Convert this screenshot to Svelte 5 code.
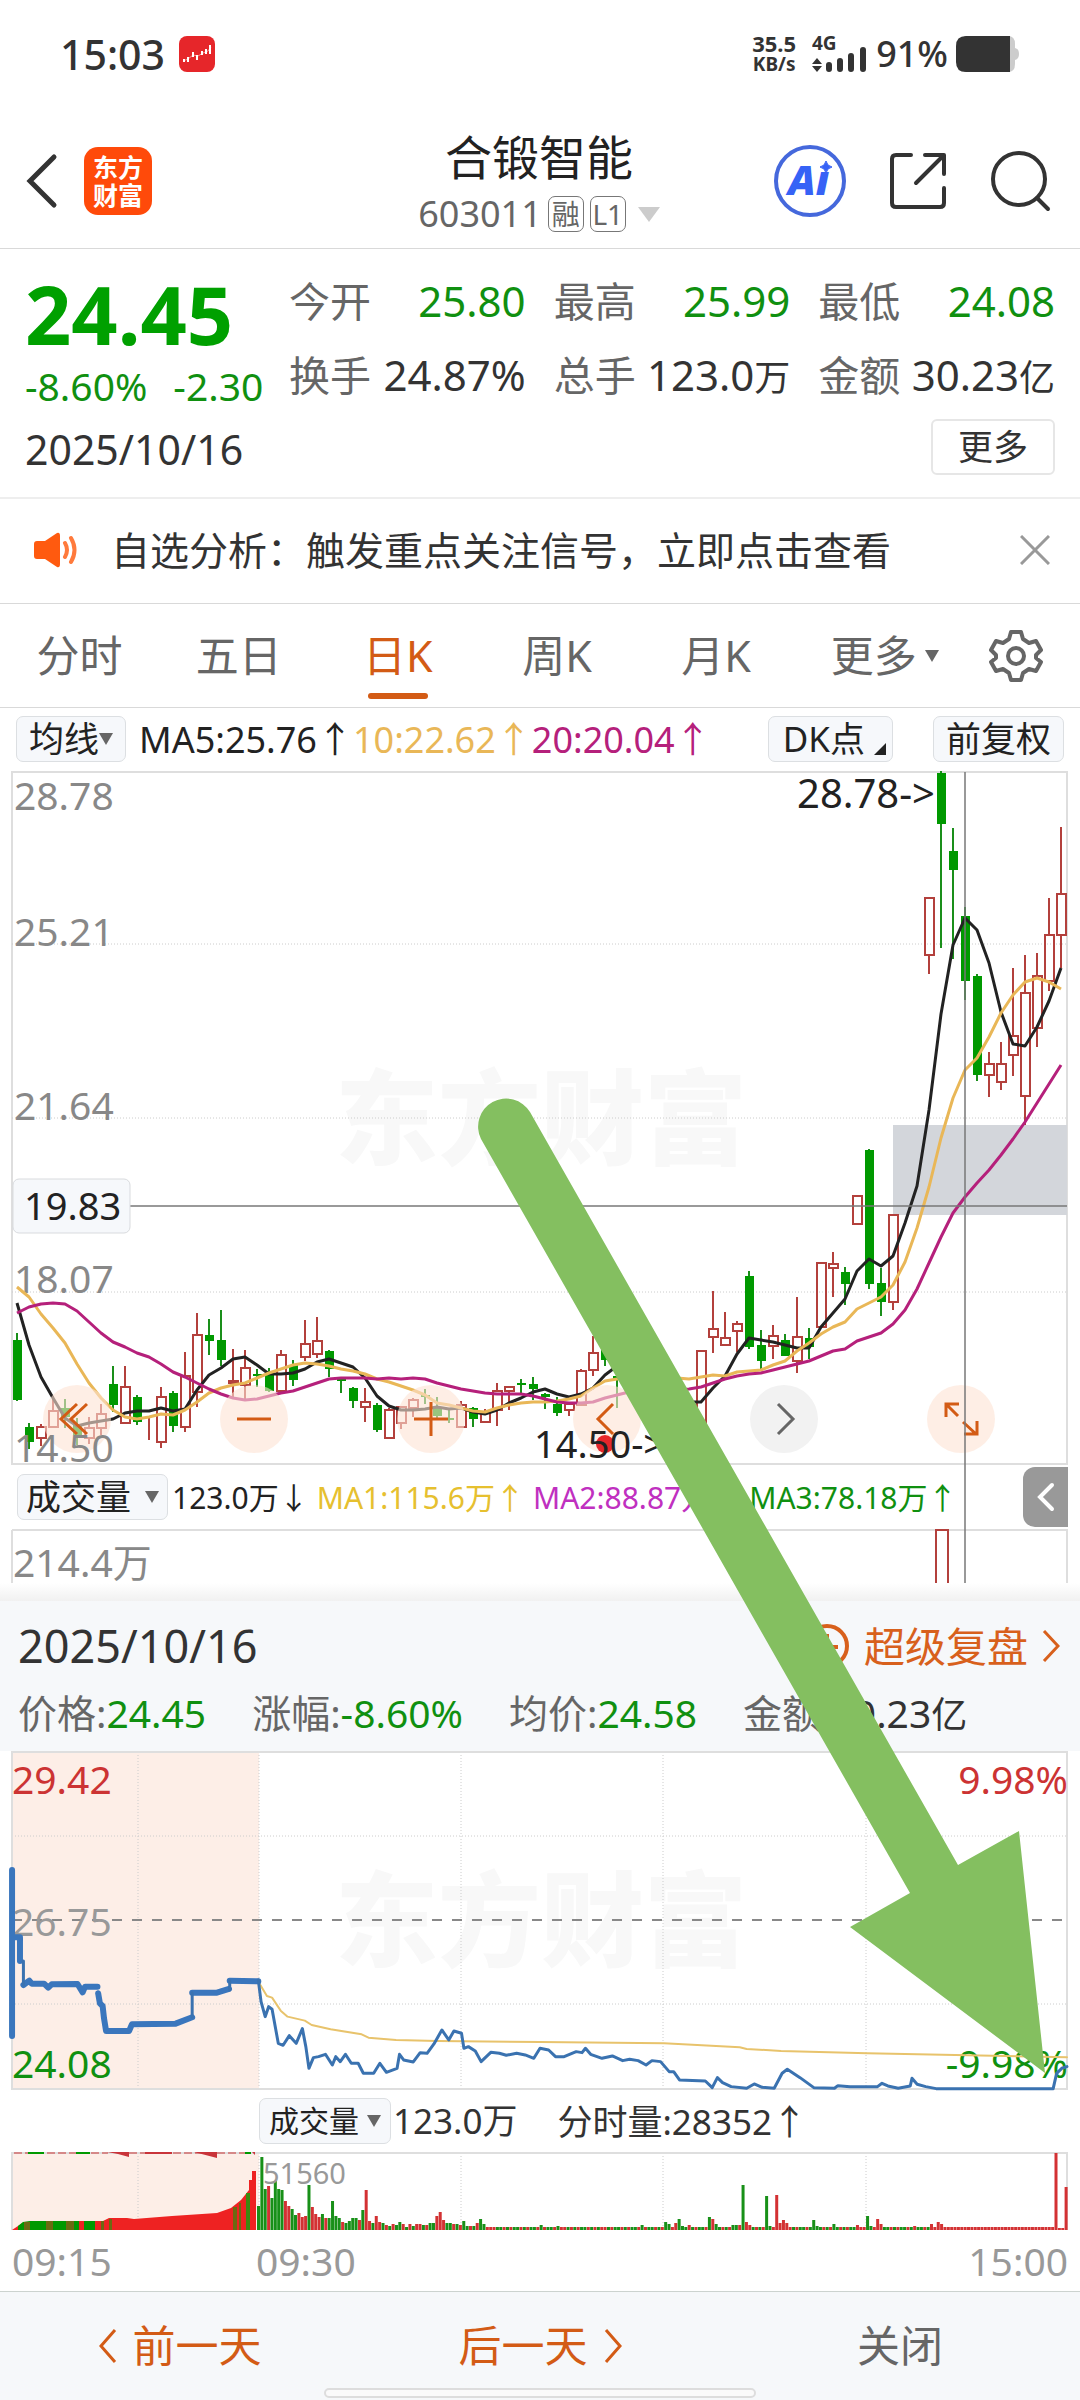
<script lang="ts">
  type Candle = [number, 'r' | 'g', number, number, number, number];

  const stats = [
    { label: '今开', value: '25.80', down: true },
    { label: '最高', value: '25.99', down: true },
    { label: '最低', value: '24.08', down: true },
    { label: '换手', value: '24.87%' },
    { label: '总手', value: '123.0', unit: '万' },
    { label: '金额', value: '30.23', unit: '亿' }
  ];

  const tabs = ['分时', '五日', '日K', '周K', '月K', '更多'];
  let activeTab = $state('日K');
  let noticeOpen = $state(true);

  const averages = [
    { text: 'MA5:25.76', cls: 'ma5' },
    { text: '10:22.62', cls: 'ma10' },
    { text: '20:20.04', cls: 'ma20' }
  ];

  const volumes = [
    { text: '123.0万', arrow: '↓', cls: 'dark' },
    { text: 'MA1:115.6万', arrow: '↑', cls: 'vol1' },
    { text: 'MA2:88.87万', arrow: '↑', cls: 'vol2' },
    { text: 'MA3:78.18万', arrow: '↑', cls: 'vol3' }
  ];

  const dayStats = [
    { label: '价格:', value: '24.45', unit: '', down: true },
    { label: '涨幅:', value: '-8.60%', unit: '', down: true },
    { label: '均价:', value: '24.58', unit: '', down: true },
    { label: '金额:', value: '30.23', unit: '亿', down: false }
  ];

  // index, colour, high, body top, body bottom, low
  const candles: Candle[] = [
    [0, 'g', 1333, 1340, 1400, 1401], [1, 'g', 1423, 1427, 1442, 1449], [2, 'r', 1424, 1427, 1438, 1446],
    [3, 'r', 1396, 1411, 1427, 1427], [4, 'g', 1399, 1408, 1417, 1428], [5, 'g', 1418, 1424, 1435, 1445],
    [6, 'r', 1417, 1428, 1438, 1444], [7, 'r', 1404, 1414, 1428, 1435], [8, 'g', 1366, 1384, 1405, 1412],
    [9, 'r', 1366, 1387, 1423, 1423], [10, 'g', 1395, 1397, 1422, 1425], [11, 'r', 1417, 1427, 1427, 1440],
    [12, 'r', 1387, 1397, 1442, 1448], [13, 'g', 1391, 1393, 1426, 1432], [14, 'r', 1352, 1376, 1427, 1432],
    [15, 'r', 1313, 1335, 1392, 1407], [16, 'g', 1319, 1335, 1341, 1355], [17, 'g', 1310, 1340, 1360, 1366],
    [18, 'r', 1349, 1381, 1383, 1397], [19, 'r', 1350, 1368, 1385, 1400], [20, 'g', 1369, 1374, 1376, 1387],
    [21, 'g', 1368, 1373, 1391, 1392], [22, 'r', 1350, 1355, 1391, 1392], [23, 'g', 1360, 1365, 1380, 1386],
    [24, 'r', 1320, 1344, 1357, 1361], [25, 'r', 1317, 1341, 1354, 1358], [26, 'g', 1350, 1351, 1369, 1377],
    [27, 'g', 1377, 1379, 1381, 1393], [28, 'g', 1387, 1388, 1401, 1408], [29, 'r', 1388, 1402, 1407, 1422],
    [30, 'g', 1403, 1405, 1430, 1432], [31, 'r', 1408, 1410, 1438, 1438], [32, 'r', 1406, 1407, 1423, 1429],
    [33, 'r', 1398, 1400, 1408, 1417], [34, 'g', 1389, 1395, 1397, 1404], [35, 'g', 1397, 1407, 1416, 1418],
    [36, 'g', 1409, 1418, 1420, 1423], [37, 'r', 1401, 1405, 1427, 1427], [38, 'g', 1407, 1408, 1419, 1427],
    [39, 'r', 1409, 1413, 1422, 1422], [40, 'r', 1383, 1391, 1410, 1426], [41, 'r', 1386, 1387, 1391, 1410],
    [42, 'g', 1379, 1383, 1385, 1393], [43, 'g', 1377, 1384, 1389, 1400], [44, 'g', 1393, 1394, 1397, 1409],
    [45, 'g', 1397, 1404, 1413, 1416], [46, 'r', 1403, 1404, 1410, 1416], [47, 'r', 1369, 1371, 1405, 1405],
    [48, 'r', 1336, 1353, 1370, 1376], [49, 'g', 1340, 1345, 1360, 1366], [50, 'g', 1370, 1376, 1380, 1408],
    [57, 'r', 1351, 1351, 1425, 1425], [58, 'r', 1291, 1329, 1337, 1353], [59, 'r', 1312, 1338, 1345, 1345],
    [60, 'r', 1321, 1324, 1331, 1352], [61, 'g', 1271, 1276, 1347, 1349], [62, 'g', 1330, 1345, 1361, 1369],
    [63, 'r', 1325, 1336, 1346, 1359], [64, 'g', 1334, 1340, 1356, 1356], [65, 'r', 1297, 1337, 1361, 1373],
    [66, 'g', 1328, 1338, 1347, 1359], [67, 'r', 1263, 1263, 1327, 1327], [68, 'r', 1252, 1264, 1268, 1297],
    [69, 'g', 1267, 1272, 1284, 1305], [70, 'r', 1196, 1196, 1224, 1224], [71, 'g', 1149, 1150, 1284, 1289],
    [72, 'g', 1268, 1283, 1302, 1316], [73, 'r', 1215, 1215, 1302, 1310], [74, 'r', 1119, 1119, 1119, 1119],
    [75, 'r', 1014, 1014, 1014, 1014], [76, 'r', 898, 898, 955, 974], [77, 'g', 771, 773, 824, 948],
    [78, 'g', 828, 851, 870, 959], [79, 'g', 907, 916, 981, 1000], [80, 'g', 974, 976, 1075, 1081],
    [81, 'r', 1052, 1064, 1075, 1097], [82, 'r', 1042, 1064, 1082, 1090], [83, 'r', 968, 1036, 1055, 1076],
    [84, 'r', 955, 993, 1096, 1125], [85, 'r', 953, 976, 1028, 1047], [86, 'r', 898, 935, 981, 991],
    [87, 'r', 827, 894, 935, 968]
  ];

  const ma5 = [
    1303, 1345, 1377, 1398, 1418, 1426, 1423, 1421, 1419, 1413, 1411, 1411, 1408, 1411, 1409, 1390, 1375, 1368,
    1359, 1357, 1365, 1374, 1374, 1373, 1369, 1362, 1359, 1363, 1367, 1378, 1396, 1406, 1410, 1410, 1409, 1407,
    1409, 1408, 1412, 1414, 1410, 1403, 1398, 1392, 1389, 1394, 1397, 1394, 1388, 1375, 1366, 1362, 1365, 1372,
    1382, 1392, 1402, 1402, 1388, 1376, 1354, 1338, 1340, 1342, 1345, 1348, 1348, 1327, 1313, 1299, 1271, 1259,
    1266, 1256, 1223, 1186, 1110, 1014, 945, 918, 930, 963, 1012, 1044, 1046, 1027, 1001, 968
  ];
  const ma10 = [
    1287, 1297, 1314, 1328, 1343, 1364, 1383, 1398, 1410, 1417, 1419, 1417, 1414, 1415, 1410, 1402, 1393, 1388,
    1385, 1383, 1378, 1373, 1369, 1365, 1363, 1364, 1366, 1369, 1371, 1374, 1379, 1382, 1386, 1390, 1395, 1403,
    1405, 1408, 1411, 1412, 1408, 1405, 1403, 1402, 1402, 1401, 1399, 1396, 1388, 1381, 1379, 1378, 1377, 1377,
    1377, 1378, 1379, 1377, 1375, 1376, 1372, 1371, 1370, 1365, 1361, 1351, 1343, 1334, 1327, 1322, 1309, 1303,
    1297, 1285, 1262, 1228, 1187, 1138, 1098, 1070, 1058, 1037, 1013, 995, 982, 978, 982, 989
  ];
  const ma20 = [
    1313, 1307, 1304, 1303, 1304, 1311, 1322, 1333, 1342, 1347, 1353, 1357, 1364, 1372, 1377, 1383, 1389, 1394,
    1398, 1400, 1399, 1396, 1393, 1391, 1387, 1383, 1379, 1378, 1378, 1378, 1379, 1378, 1379, 1378, 1379, 1383,
    1386, 1389, 1391, 1393, 1394, 1394, 1394, 1396, 1399, 1402, 1403, 1403, 1402, 1398, 1395, 1392, 1391, 1391,
    1390, 1390, 1389, 1387, 1383, 1379, 1376, 1374, 1373, 1370, 1367, 1364, 1361, 1356, 1351, 1349, 1341, 1337,
    1333, 1324, 1310, 1289, 1263, 1237, 1213, 1197, 1183, 1170, 1155, 1139, 1122, 1103, 1084, 1065
  ];

  const candleX = (i: number) => 17 + i * 12;
  const toPoints = (ys: number[]) => ys.map((y, i) => `${candleX(i)},${y}`).join(' ');

  // minute volume after the open, then single peaks over a flat base
  const opening = [
    72, 218, 122, 132, 95, 148, 122, 120, 88, 72, 62, 45, 52, 40, 42, 135, 70, 48, 38, 48, 35, 35, 87, 42, 35,
    25, 20, 28, 35, 35, 30, 60, 121, 27, 20, 42, 25, 20, 15, 13, 18, 15, 25, 18, 10, 18, 12, 17, 18, 15, 16, 22,
    20, 42, 53, 30, 22, 20, 17, 17, 15, 28, 13, 11, 11, 20, 34, 17
  ];
  const peaks: Record<number, number> = {
    84: 14, 89: 13, 114: 15, 121: 25, 122: 17, 124: 20, 125: 32, 126: 13, 128: 16, 134: 38, 135: 32, 136: 18,
    141: 14, 142: 14, 143: 14, 144: 134, 145: 23, 146: 15, 151: 101, 152: 11, 154: 104, 155: 20, 156: 30, 157: 22,
    165: 29, 166: 12, 171: 18, 178: 14, 181: 41, 182: 12, 184: 32, 185: 17, 195: 12, 200: 17, 202: 24, 203: 17,
    237: 230, 240: 128
  };
  const greens = [0, 1, 2, 4, 5, 6, 7, 10, 11, 15, 22, 23, 27, 28, 31, 66, 121, 125, 134, 144, 151, 165, 171, 181];
  const reds = [3, 8, 9, 12, 16, 17, 32, 35, 53, 54, 55, 135, 154, 156, 157, 184, 202, 237, 240];

  const minuteBars = Array.from({ length: 241 }, (_, i) => {
    const h = opening[i] ?? peaks[i] ?? (i > 237 ? 5 : i % 4 === 1 ? 10 : 8);
    const red = reds.includes(i) || (!greens.includes(i) && ((i * 7) % 5 < 2 || i > 202 || i % 11 === 3));
    return { x: 257 + i * 3.365, h: Math.round(h / 3), red };
  });

  // x, width, top, colour
  const auctionStripes: [number, number, number, string][] = [
    [24, 6, 2222, '#6c6a12'], [46, 7, 2221, '#6c6a12'], [66, 8, 2221, '#6c6a12'], [79, 5, 2221, '#e22'],
    [96, 4, 2222, '#e22'], [101, 3, 2221, '#6c6a12'], [109, 3, 2219, '#6c6a12'], [233, 4, 2207, '#6c6a12'],
    [239, 2, 2203, '#6c6a12'], [246, 4, 2193, '#3c8a10']
  ];

  const roundButtons = [
    { name: '最早', d: 'M34 19L18 34L34 49M44 19L28 34L44 49' },
    { name: '缩小', d: 'M17 34H51' },
    { name: '放大', d: 'M17 34H51M34 17V51' },
    { name: '左移', d: 'M40 19L25 34L40 49' },
    { name: '右移', d: 'M28 19L43 34L28 49', grey: true },
    { name: '全屏', d: 'M19 32V19H32M20 20L31 31M36 37L49 49M50 36V49H37' }
  ];
</script>

{#snippet watermark(y: number)}
  <text class="watermark" x="335" {y}>东方财富</text>
{/snippet}

{#snippet caret()}
  <svg class="caret" viewBox="0 0 14 12" aria-hidden="true"><path d="M0 0H14L7 12Z" /></svg>
{/snippet}

<main class="page">
  <div class="status">
    <span class="clock">15:03</span>
    <svg class="app-badge" viewBox="0 0 36 36" aria-hidden="true">
      <rect width="36" height="36" rx="8" fill="#e6262a" />
      <path d="M4 25L9 23L14 19L19 20L24 17L29 15L32 11" stroke="#f79a94" fill="none" />
      <path d="M5 23V26M9 21V26M14 16V21M18 19V24M23 15V19M27 13V18M31 9V18" stroke="#fff" stroke-width="2" />
    </svg>
    <div class="speed"><span>35.5</span><span class="kb">KB/s</span></div>
    <svg class="signal" viewBox="0 0 56 38" aria-hidden="true">
      <text x="0" y="15">4G</text>
      <path d="M0 29L5 23L10 29ZM0 31H10L5 37Z" fill="#333" />
      <path d="M17 30V34M28 26V34M39 21V34M51 15V34" stroke="#333" stroke-width="6" stroke-linecap="round" />
    </svg>
    <span class="percent">91%</span>
    <svg class="battery" viewBox="0 0 63 36" aria-hidden="true">
      <path d="M8 0H52Q59 0 59 8V12Q63 13 63 18Q63 23 59 24V28Q59 36 52 36H8Z" fill="#ccc" />
      <path d="M10 0H54V36H10Q0 36 0 26V10Q0 0 10 0Z" fill="#333" />
    </svg>
  </div>

  <header class="header">
    <div class="header-left">
      <button class="icon-btn" aria-label="返回">
        <svg width="32" height="56" viewBox="0 0 32 56"><path d="M28 4L4 28L28 52" class="ink" stroke-width="5" /></svg>
      </button>
      <button class="logo"><span>东方</span><span>财富</span></button>
    </div>
    <div class="title">
      <h1>合锻智能</h1>
      <div class="code">
        <span>603011</span><span class="tag">融</span><span class="tag">L1</span>
        <svg width="22" height="15" viewBox="0 0 22 15"><path d="M0 0H22L11 15Z" fill="#ccc" /></svg>
      </div>
    </div>
    <div class="header-right">
      <button class="icon-btn" aria-label="AI">
        <svg width="72" height="72" viewBox="0 0 72 72">
          <circle cx="36" cy="36" r="34" fill="#fff" stroke="#4568dc" stroke-width="4" />
          <text class="ai" x="14" y="50">Aı</text>
          <path d="M52 16Q53 21 58 22Q53 23 52 28Q51 23 46 22Q51 21 52 16Z" fill="#3662f6" stroke="#3662f6" />
        </svg>
      </button>
      <button class="icon-btn" aria-label="分享">
        <svg width="60" height="60" viewBox="0 0 60 60">
          <path d="M23 4H8Q4 4 4 8V52Q4 56 8 56H52Q56 56 56 52V37M37 4H56V23M55 5L28 32" class="ink" stroke-width="4" stroke-linejoin="round" />
        </svg>
      </button>
      <button class="icon-btn" aria-label="搜索">
        <svg width="62" height="62" viewBox="0 0 62 62">
          <circle cx="29" cy="29" r="26" class="ink" stroke-width="4" />
          <path d="M47 48L58 59" class="ink" stroke-width="4" />
        </svg>
      </button>
    </div>
  </header>

  <section class="quote">
    <div class="quote-top">
      <div class="price-box">
        <div class="price">24.45</div>
        <div class="change"><span>-8.60%</span><span>-2.30</span></div>
      </div>
      <dl class="stats">
        {#each stats as s}
          <div class="stat">
            <dt>{s.label}</dt>
            <dd class:down={s.down}>{s.value}{#if s.unit}<span class="unit">{s.unit}</span>{/if}</dd>
          </div>
        {/each}
      </dl>
    </div>
    <div class="quote-bottom">
      <span class="date">2025/10/16</span>
      <button class="more">更多</button>
    </div>
  </section>

  {#if noticeOpen}
    <section class="notice">
      <svg width="44" height="36" viewBox="0 0 44 36" aria-hidden="true">
        <path d="M3 9H11L23 1Q26 0 26 4V32Q26 36 23 35L11 27H3Q0 27 0 24V12Q0 9 3 9Z" fill="#ff5a0f" />
        <path d="M31 11Q35 18 31 25M37 6Q44 18 37 30" fill="none" stroke="#ff7a3c" stroke-width="4" stroke-linecap="round" />
      </svg>
      <p>自选分析：触发重点关注信号，立即点击查看</p>
      <button class="icon-btn" aria-label="关闭提示" onclick={() => (noticeOpen = false)}>
        <svg width="30" height="30" viewBox="0 0 30 30"><path d="M1 1L29 29M29 1L1 29" stroke="#999" stroke-width="3" /></svg>
      </button>
    </section>
  {/if}

  <nav class="tabs">
    {#each tabs as tab}
      <button class="tab" class:active={tab === activeTab} onclick={() => (activeTab = tab)}>
        {tab}{#if tab === '更多'}{@render caret()}{/if}
      </button>
    {/each}
    <button class="icon-btn gear" aria-label="设置">
      <svg width="54" height="54" viewBox="0 0 54 54" fill="none" stroke="#666" stroke-width="4">
        <path stroke-linejoin="round" d="M22 3H32L34 10L40 14L47 12L52 21L47 26V29L52 33L47 42L40 40L34 44L32 51H22L20 44L14 40L7 42L2 33L7 29V26L2 21L7 12L14 14L20 10Z" />
        <circle cx="27" cy="27" r="8" />
      </svg>
    </button>
  </nav>

  <section class="kline">
    <div class="toolbar">
      <button class="chip">均线{@render caret()}</button>
      <div class="averages">
        {#each averages as a}
          <span class={a.cls}>{a.text}<span class="arrow">↑</span></span>
        {/each}
      </div>
      <button class="chip dk">DK点<svg width="12" height="12" viewBox="0 0 12 12"><path d="M12 0V12H0Z" fill="#222" /></svg></button>
      <button class="chip">前复权</button>
    </div>

    <div class="plot">
      <svg class="chart" viewBox="0 771 1080 694">
        {@render watermark(1157)}
        <path class="frame" d="M12 772H1067V1465M12 771V1464H1067" />
        <path class="dots" d="M12 944H1067M12 1118H1067M12 1292H1067" />
        <rect x="893" y="1125" width="174" height="90" fill="#d3d6db" />
        <g class="axis">
          <text x="14" y="810">28.78</text>
          <text x="14" y="946">25.21</text>
          <text x="14" y="1120">21.64</text>
          <text x="14" y="1293">18.07</text>
        </g>
        {#each candles as [i, color, high, top, bottom, low]}
          {#if color === 'g'}
            <path class="wick-g" d="M{candleX(i)} {high}V{low}" />
            <rect x={candleX(i) - 4} y={top} width="9" height={bottom - top} fill="#009900" />
          {:else}
            <path class="wick-r" d="M{candleX(i)} {high}V{top}M{candleX(i)} {bottom}V{low}" />
            <rect class="wick-r" x={candleX(i) - 4} y={top} width="9" height={bottom - top} />
          {/if}
        {/each}
        <polyline class="line" points={toPoints(ma5)} stroke="#222" />
        <polyline class="line" points={toPoints(ma10)} stroke="#e9b757" />
        <polyline class="line" points={toPoints(ma20)} stroke="#b5207b" />
        <text class="mark high" x="797" y="808">28.78-&gt;</text>
      </svg>
      <div class="round-buttons">
        {#each roundButtons as b}
          <button class="round" class:grey={b.grey} aria-label={b.name}>
            <svg viewBox="0 0 68 68"><path d={b.d} /></svg>
          </button>
        {/each}
      </div>
      <svg class="cover" viewBox="0 771 1080 694">
        <circle cx="605" cy="1444" r="9" fill="#e6262a" />
        <text class="axis" x="14" y="1462">14.50</text>
        <text class="mark" x="534" y="1458">14.50-&gt;</text>
      </svg>
    </div>

    <div class="volume-bar">
      <button class="chip wide">成交量{@render caret()}</button>
      <div class="volumes">
        {#each volumes as v}
          <span class={v.cls}>{v.text}<span class="arrow">{v.arrow}</span></span>
        {/each}
      </div>
      <button class="drawer" aria-label="展开">
        <svg width="18" height="30" viewBox="0 0 18 30"><path d="M15 3L3 15L15 27" fill="none" stroke="#fff" stroke-width="4" stroke-linecap="round" /></svg>
      </button>
    </div>

    <svg class="chart" viewBox="0 1529 1080 54">
      <path class="frame" d="M12 1530H1067V1583M12 1530V1583" />
      <path class="wick-r" d="M936 1583V1530H948V1583" />
      <text class="axis" x="13" y="1577">214.4万</text>
    </svg>

    <svg class="crosshair" viewBox="0 708 1080 875" aria-hidden="true">
      <path d="M130 1206H1067M965 772V1583" stroke="#777" stroke-opacity="0.75" stroke-width="2" fill="none" />
      <rect x="13" y="1179" width="117" height="54" rx="6" fill="#f6f8fb" stroke="#d9dbde" />
      <text class="mark" x="24" y="1220">19.83</text>
    </svg>
  </section>

  <div class="shade"></div>

  <section class="day">
    <div class="day-head">
      <span class="day-date">2025/10/16</span>
      <a class="review" href="#review">
        <svg width="46" height="46" viewBox="0 0 46 46" fill="none" stroke="#d8601c" stroke-width="4">
          <circle cx="23" cy="23" r="20" /><path d="M23 11V24H34" />
        </svg>
        <span>超级复盘</span>
        <svg width="18" height="32" viewBox="0 0 18 32" fill="none" stroke="#d8601c" stroke-width="3"><path d="M2 1L16 16L2 31" /></svg>
      </a>
    </div>
    <div class="day-stats">
      {#each dayStats as s}
        <span>{s.label}<b class:down={s.down}>{s.value}{#if s.unit}<span class="unit">{s.unit}</span>{/if}</b></span>
      {/each}
    </div>
  </section>

  <section class="intraday">
    <svg class="chart" viewBox="0 1751 1080 340">
      <rect x="12" y="1751" width="247" height="338" fill="#fdeee7" />
      {@render watermark(1959)}
      <path class="dots" d="M138 1752V2088M259 1752V2088M461 1752V2088M663 1752V2088M866 1752V2088M12 1836H1067M12 2004H1067" />
      <path class="frame" d="M12 1752H1067V2089H12Z" />
      <path d="M12 1920H1067" stroke="#888" stroke-width="2" stroke-dasharray="10 10" />
      <g class="axis">
        <text class="red" x="12" y="1794">29.42</text>
        <text class="muted" x="12" y="1936">26.75</text>
        <text class="green" x="12" y="2078">24.08</text>
        <text class="red end" x="1068" y="1794">9.98%</text>
        <text class="green end" x="1068" y="2078">-9.98%</text>
      </g>
      <g class="trend" transform="translate(0 1740) scale(0.3444 0.3333)">
        <path class="avg" d="M752 728L775 768L790 773L815 812L835 830L885 842L905 855L960 868L1050 883L1070 893L1150 900L1270 903L1568 906L1928 910L2148 922L2168 927L2268 933L2518 940L3098 952" />
        <path class="auction" d="M35 390V888M40 592H58V663M68 735L85 722L92 731H128L140 743L150 733L225 732L240 757L247 740H283M285 760L290 790L298 798L302 835L308 873H375L383 853L510 851L558 832M558 758H630L665 747M667 722L750 724" />
        <path class="price-line" d="M68 663V735M558 832V758M667 750V722M750 720L758 785L770 830L780 800L790 808L808 910L822 916L840 887L860 910L878 866L888 920L897 985L910 953L925 950L945 943L965 975L975 950L988 965L1003 943L1020 970L1040 970L1055 1000L1085 1000L1103 970L1122 997L1153 985L1160 943L1172 960L1200 966L1220 938L1240 940L1260 912L1283 870L1303 900L1318 873L1340 880L1347 925L1360 920L1380 933L1397 965L1425 937L1450 940L1470 946L1500 940L1525 945L1550 955L1568 925L1593 930L1613 950L1638 950L1673 935L1690 938L1700 925L1715 943L1748 955L1778 948L1808 962L1828 958L1853 962L1876 975L1893 962L1918 965L1943 995L1956 995L1973 1020L2048 1023L2068 1043L2083 1013L2098 1028L2123 1040L2168 1045L2190 1032L2213 1042L2248 1045L2271 1000L2286 988L2323 1013L2363 1043L2423 1045L2433 1037L2468 1040L2548 1040L2561 1030L2578 1038L2608 1045L2643 1038L2648 1015L2663 1033L2688 1040L2718 1046H3058L3068 1000L3083 985L3098 980" />
      </g>
    </svg>

    <div class="minute-head">
      <button class="chip small">成交量{@render caret()}</button>
      <span>123.0万</span>
      <span class="minute-volume">分时量:28352<span class="arrow">↑</span></span>
    </div>

    <svg class="chart" viewBox="0 2152 1080 79">
      <rect x="12" y="2152" width="247" height="78" fill="#fdeee7" />
      <path class="dots" d="M138 2153V2230M259 2153V2230M461 2153V2230M663 2153V2230M866 2153V2230" />
      <path class="frame" d="M12 2230V2153H1067V2230" />
      <path d="M12 2230L24 2222L69 2221L103 2221L109 2218L127 2218L134 2219L172 2216L217 2213L231 2208L241 2200L249 2190V2180H252V2171H256V2230Z" fill="#e22" />
      <path d="M18 2230V2226L23 2222L30 2221H95V2230Z" fill="#009900" />
      {#each auctionStripes as [x, width, top, fill]}
        <rect {x} y={top} {width} height={2230 - top} {fill} />
      {/each}
      <path d="M14 2153H108M118 2153H247" stroke="#c33" stroke-dasharray="8 3" />
      <path d="M107 2152H129V2157L118 2154ZM145 2152H172V2154H145ZM194 2152H217V2158ZM252 2152H255V2155Z" fill="#c9343a" />
      <path d="M28 2153H44M76 2153H90M245 2153H251" stroke="#009900" stroke-width="2" />
      {#each minuteBars as bar}
        <rect x={bar.x} y={2230 - bar.h} width="3" height={bar.h} fill={bar.red ? '#d33133' : '#189018'} />
      {/each}
      <text class="peak" x="263" y="2184">51560</text>
    </svg>

    <div class="times"><span>09:15</span><span>09:30</span><span>15:00</span></div>
  </section>

  <footer class="footer">
    <button class="day-nav">
      <svg width="18" height="34" viewBox="0 0 18 34"><path d="M16 1L2 17L16 33" /></svg>前一天
    </button>
    <button class="day-nav">
      后一天<svg width="18" height="34" viewBox="0 0 18 34"><path d="M2 1L16 17L2 33" /></svg>
    </button>
    <button class="day-nav close">关闭</button>
    <div class="home-bar"></div>
  </footer>

  <svg class="pointer" viewBox="0 0 1080 2400" aria-hidden="true">
    <path d="M481 1139A28 28 0 0 1 530 1112L958 1865L1019 1831L1045 2073L850 1927L910 1893Z" fill="#84bf60" />
  </svg>
</main>

<style>
  :global(body) {
    margin: 0;
    background: #fff;
  }

  .page {
    position: relative;
    overflow: hidden;
    background: #fff;
    color: #333;
    font-family: 'Noto Sans', 'Noto Sans CJK SC', sans-serif;
  }

  button {
    font: inherit;
    color: inherit;
    padding: 0;
    border: 0;
    background: none;
    cursor: pointer;
  }

  svg {
    display: block;
    flex: none;
  }

  svg text {
    font-family: 'Noto Sans', 'Noto Sans CJK SC', sans-serif;
  }

  h1,
  p,
  dl,
  dd {
    margin: 0;
  }

  .down {
    color: #109010;
  }

  .unit {
    font-size: 36px;
  }

  .ink {
    fill: none;
    stroke: #333;
    stroke-linecap: round;
  }

  .icon-btn {
    display: flex;
  }

  .caret {
    width: 14px;
    height: 12px;
    fill: #666;
  }

  /* status bar */
  .status {
    display: flex;
    align-items: center;
    height: 112px;
    padding: 0 61px 4px 60px;
    box-sizing: border-box;
    color: #333;
    font-weight: 500;
  }

  .clock {
    font-size: 41px;
    line-height: 48px;
  }

  .app-badge {
    width: 36px;
    height: 36px;
    margin-left: 14px;
  }

  .speed {
    display: flex;
    flex-direction: column;
    align-items: center;
    margin-left: auto;
    font-size: 22px;
    line-height: 21px;
    font-weight: 700;
  }

  .kb {
    font-size: 19px;
  }

  .signal {
    width: 56px;
    height: 38px;
    margin-left: 16px;
  }

  .signal text {
    font-size: 19px;
    font-weight: 700;
    fill: #333;
  }

  .percent {
    margin-left: 8px;
    font-size: 36px;
    line-height: 40px;
  }

  .battery {
    width: 63px;
    height: 36px;
    margin-left: 8px;
  }

  /* header */
  .header {
    display: grid;
    grid-template-columns: 1fr auto 1fr;
    align-items: center;
    height: 134px;
    padding: 2px 28px 0 26px;
    border-bottom: 1px solid #d9d9d9;
  }

  .header-left,
  .header-right {
    display: flex;
    align-items: center;
  }

  .header-left {
    gap: 26px;
  }

  .header-right {
    justify-content: flex-end;
    gap: 42px;
  }

  .logo {
    display: flex;
    flex-direction: column;
    justify-content: center;
    width: 68px;
    height: 68px;
    border-radius: 14px;
    background: #ff4a0a;
    color: #fff;
    font-size: 25px;
    line-height: 28px;
    font-weight: 700;
  }

  .ai {
    font-size: 41px;
    font-weight: 900;
    font-style: italic;
    fill: #3662f6;
  }

  .title {
    display: flex;
    flex-direction: column;
    align-items: center;
    padding-top: 6px;
  }

  .title h1 {
    font-size: 47px;
    line-height: 60px;
    font-weight: 400;
    color: #222;
  }

  .code {
    display: flex;
    align-items: center;
    gap: 6px;
    height: 54px;
    font-size: 36px;
    line-height: 40px;
    color: #666;
  }

  .code svg {
    margin-left: 6px;
  }

  .tag {
    width: 34px;
    height: 34px;
    border: 1px solid #777;
    border-radius: 7px;
    text-align: center;
    font-size: 28px;
    line-height: 34px;
  }

  /* quote */
  .quote {
    padding: 21px 25px;
    border-bottom: 2px solid #eee;
  }

  .quote-top {
    display: flex;
    height: 148px;
  }

  .price-box {
    width: 264px;
    color: #109010;
  }

  .price {
    font-size: 81px;
    line-height: 88px;
    font-weight: 700;
    color: #00a000;
  }

  .change {
    display: flex;
    gap: 26px;
    margin-top: 6px;
    font-size: 39px;
    line-height: 44px;
  }

  .stats {
    flex: 1;
    display: grid;
    grid-template-columns: repeat(3, 1fr);
    align-content: start;
    gap: 26px 28px;
    padding-top: 7px;
  }

  .stat {
    display: flex;
    justify-content: space-between;
    white-space: nowrap;
    font-size: 42px;
    line-height: 48px;
  }

  .stat dt {
    font-size: 41px;
    color: #666;
  }

  .quote-bottom {
    display: flex;
    justify-content: space-between;
    align-items: center;
    height: 58px;
  }

  .date {
    padding-top: 4px;
    font-size: 41px;
    line-height: 48px;
  }

  .more {
    width: 124px;
    height: 56px;
    border: 2px solid #e6e6e6;
    border-radius: 6px;
    font-size: 35px;
    line-height: 48px;
  }

  /* notice */
  .notice {
    display: flex;
    align-items: center;
    height: 102px;
    padding: 0 30px 2px 34px;
    border-bottom: 1px solid #d9d9d9;
  }

  .notice p {
    flex: 1;
    margin-left: 33px;
    font-size: 39px;
    line-height: 48px;
    white-space: nowrap;
  }

  /* tabs */
  .tabs {
    display: grid;
    grid-template-columns: repeat(5, 159fr) 178fr 84fr;
    height: 103px;
    padding-right: 22px;
    border-bottom: 1px solid #d9d9d9;
  }

  .tab {
    position: relative;
    display: flex;
    align-items: center;
    justify-content: center;
    gap: 8px;
    font-size: 43px;
    line-height: 52px;
    color: #666;
  }

  .tab.active {
    color: #d35b15;
  }

  .tab.active::after {
    content: '';
    position: absolute;
    bottom: 8px;
    width: 60px;
    height: 6px;
    border-radius: 3px;
    background: #d35b15;
  }

  .gear {
    align-items: center;
    justify-content: center;
  }

  /* day chart */
  .kline {
    position: relative;
  }

  .toolbar {
    display: flex;
    align-items: center;
    height: 61px;
    padding: 0 16px 2px;
  }

  .chip {
    display: flex;
    align-items: center;
    justify-content: center;
    flex: none;
    height: 46px;
    padding: 0 12px;
    border: 1px solid #dcdfe2;
    border-radius: 7px;
    box-sizing: border-box;
    background: #f6f8fb;
    color: #222;
    font-size: 35px;
    line-height: 44px;
  }

  .chip.dk {
    align-items: flex-end;
    gap: 9px;
    margin: 0 40px 0 auto;
    padding: 0 6px 0 14px;
  }

  .dk svg {
    margin-bottom: 6px;
  }

  .chip.wide {
    gap: 14px;
    padding: 0 8px;
  }

  .chip.small {
    gap: 8px;
    padding: 0 9px;
    font-size: 30px;
  }

  .averages {
    display: flex;
    margin-left: 13px;
    font-size: 36px;
    line-height: 44px;
    white-space: nowrap;
  }

  .arrow {
    font-family: 'Noto Sans CJK SC', sans-serif;
  }

  .ma5,
  .dark {
    color: #222;
  }

  .ma10 {
    color: #e9b757;
  }

  .ma20 {
    color: #b5207b;
  }

  .vol1 {
    color: #e6c02f;
  }

  .vol2 {
    color: #c030c0;
  }

  .vol3 {
    color: #109010;
  }

  .plot {
    position: relative;
  }

  .chart {
    width: 100%;
    height: auto;
  }

  .cover,
  .crosshair {
    position: absolute;
    inset: 0;
    width: 100%;
    height: 100%;
    pointer-events: none;
  }

  .frame {
    fill: none;
    stroke: #dedede;
    stroke-width: 2;
  }

  .dots {
    fill: none;
    stroke: #ccc;
    stroke-dasharray: 1 2;
  }

  .axis {
    font-size: 39px;
    fill: #888;
  }

  .mark {
    font-size: 38px;
    fill: #222;
  }

  .mark.high {
    font-size: 40px;
  }

  .watermark {
    font-size: 103px;
    font-weight: 900;
    fill: #f8f8f8;
  }

  .wick-g {
    stroke: #1a8f1a;
    stroke-width: 2;
  }

  .wick-r {
    fill: none;
    stroke: #b3403c;
    stroke-width: 2;
  }

  .line {
    fill: none;
    stroke-width: 3;
    stroke-linejoin: round;
  }

  .round-buttons {
    position: absolute;
    bottom: 12px;
    left: 43px;
    right: 85px;
    display: flex;
    justify-content: space-between;
  }

  .round {
    width: 68px;
    height: 68px;
    border-radius: 50%;
    background: rgba(253, 226, 212, 0.6);
  }

  .round path {
    fill: none;
    stroke: #d35b15;
    stroke-width: 3;
  }

  .round.grey {
    background: #f2f2f2;
  }

  .round.grey path {
    stroke: #666;
  }

  .volume-bar {
    display: flex;
    align-items: center;
    height: 64px;
    padding: 0 12px 0 17px;
  }

  .volumes {
    display: flex;
    flex: 1;
    gap: 8px;
    margin-left: 4px;
    font-size: 30px;
    line-height: 44px;
    white-space: nowrap;
  }

  .drawer {
    display: flex;
    align-items: center;
    justify-content: center;
    width: 45px;
    height: 60px;
    border-radius: 12px 0 0 12px;
    background: #999;
  }

  .shade {
    height: 18px;
    background: linear-gradient(#fff, #f1f1f1);
  }

  /* selected day */
  .day {
    height: 150px;
    padding: 0 20px 0 18px;
    box-sizing: border-box;
    background: #f6f8fa;
  }

  .day-head {
    display: flex;
    justify-content: space-between;
    align-items: center;
    height: 90px;
  }

  .day-date {
    font-size: 45px;
    line-height: 52px;
  }

  .review {
    display: flex;
    align-items: center;
    gap: 14px;
    color: #d8601c;
    font-size: 41px;
    line-height: 52px;
    text-decoration: none;
  }

  .day-stats {
    display: flex;
    gap: 46px;
    font-size: 39px;
    line-height: 44px;
    color: #666;
    white-space: nowrap;
  }

  .day-stats b {
    font-weight: 400;
    color: #333;
  }

  .day-stats .down {
    color: #109010;
  }

  .axis .red {
    fill: #cc3333;
  }

  .axis .green {
    fill: #109010;
  }

  .axis .muted {
    fill: #999;
  }

  .axis .end {
    text-anchor: end;
  }

  .trend path {
    fill: none;
    stroke: #3a72b0;
    stroke-width: 3;
    stroke-linejoin: round;
    stroke-linecap: round;
    vector-effect: non-scaling-stroke;
  }

  .trend .auction {
    stroke: #3a76bd;
    stroke-width: 6;
  }

  .trend .avg {
    stroke: #e8c36c;
    stroke-width: 2;
  }

  .minute-head {
    display: flex;
    align-items: center;
    height: 59px;
    padding: 0 12px 2px;
    margin-left: 247px;
    font-size: 35px;
    line-height: 44px;
    white-space: nowrap;
  }

  .minute-head > span {
    margin-left: 2px;
  }

  .minute-head .minute-volume {
    margin-left: 40px;
  }

  .peak {
    font-size: 29px;
    fill: #999;
  }

  .times {
    display: grid;
    grid-template-columns: 244px auto 1fr;
    height: 60px;
    padding: 0 12px;
    align-items: center;
    font-size: 39px;
    line-height: 44px;
    color: #999;
  }

  .times span:last-child {
    text-align: right;
  }

  /* footer */
  .footer {
    position: relative;
    display: grid;
    grid-template-columns: repeat(3, 1fr);
    height: 108px;
    border-top: 1px solid #ccd3cf;
    background: #f6f8fa;
  }

  .day-nav {
    display: flex;
    align-items: center;
    justify-content: center;
    gap: 16px;
    color: #d35b15;
    font-size: 43px;
    line-height: 52px;
  }

  .day-nav path {
    fill: none;
    stroke: #d35b15;
    stroke-width: 3;
  }

  .day-nav.close {
    color: #666;
  }

  .home-bar {
    position: absolute;
    left: 30%;
    right: 30%;
    bottom: 2px;
    height: 6px;
    border: 2px solid #ddd;
    border-radius: 5px;
    background: #fafafa;
  }

  .pointer {
    position: absolute;
    top: 0;
    left: 0;
    width: 100%;
    height: auto;
    pointer-events: none;
  }
</style>
